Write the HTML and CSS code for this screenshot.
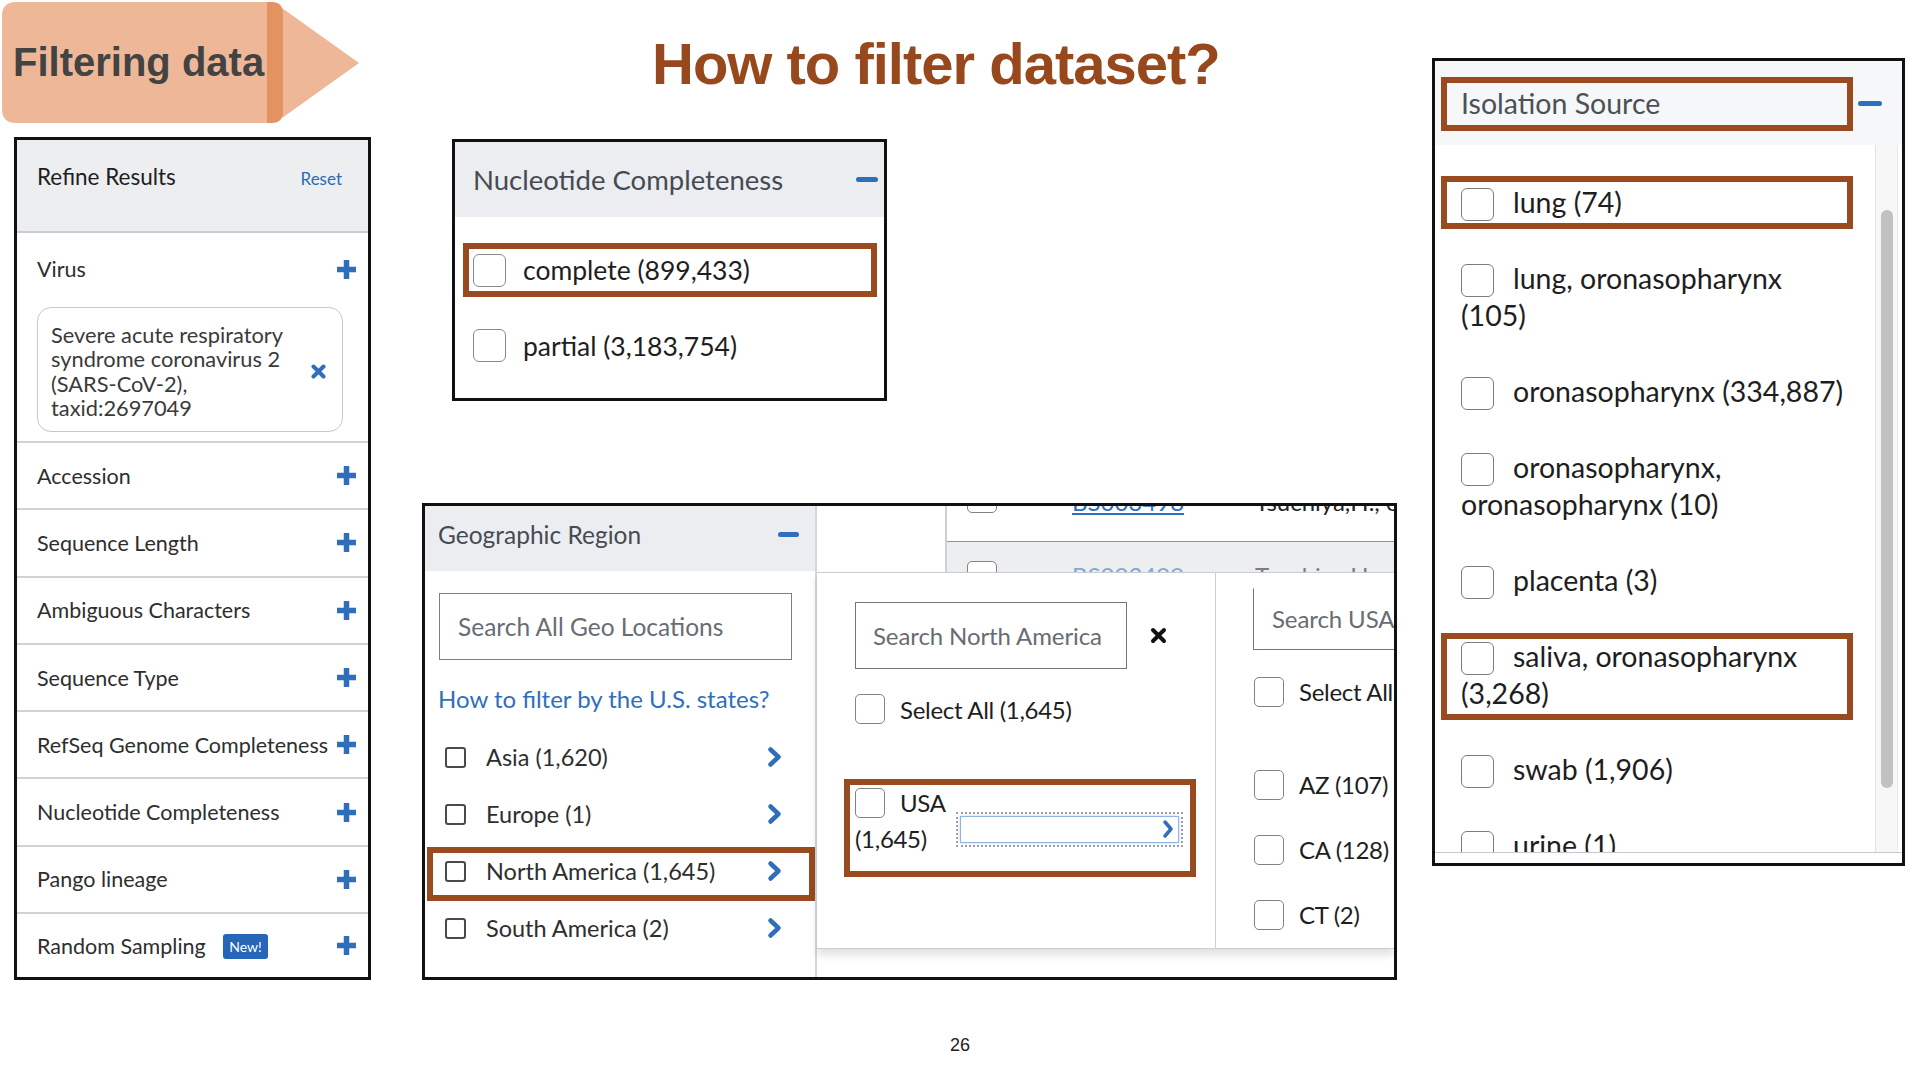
FILE: index.html
```html
<!DOCTYPE html>
<html lang="en">
<head>
<meta charset="utf-8">
<title>Filtering data</title>
<link rel="stylesheet" href="styles.css">
</head>
<body>
<div class="slide">

  <div class="banner">
    <svg class="banner-shape" width="362" height="126" viewBox="0 0 362 126">
      <path d="M16 2 H272 V123 H16 Q2 123 2 109 V16 Q2 2 16 2 Z" fill="#EEB898"/>
      <path d="M282 8 L359 63 L282 118 Z" fill="#EEB898"/>
      <path d="M267 2 H272 Q283 2 283 14 V111 Q283 123 272 123 H267 Z" fill="#E4925F"/>
    </svg>
    <span class="banner-text">Filtering data</span>
  </div>

  <h1 class="title">How to filter dataset?</h1>

  <!-- Refine Results sidebar -->
  <section class="refine">
    <header class="refine-head">
      <span class="refine-title">Refine Results</span>
      <span class="reset">Reset</span>
    </header>
    <div class="virus">
      <div class="facet-row virus-row"><span>Virus</span><svg class="ic-plus" width="19" height="19" viewBox="0 0 19 19"><path d="M9.5 1V18M1 9.5H18" stroke="#2f6eba" stroke-width="5.5" stroke-linecap="round"/></svg></div>
      <div class="chip">
        <span class="chip-text">Severe acute respiratory<br>syndrome coronavirus 2<br>(SARS-CoV-2),<br>taxid:2697049</span>
        <svg width="15" height="15" viewBox="0 0 15 15"><path d="M2.5 2.5L12.5 12.5M12.5 2.5L2.5 12.5" stroke="#2f6eba" stroke-width="4" stroke-linecap="round"/></svg>
      </div>
    </div>
    <div class="facet-row"><span>Accession</span><svg class="ic-plus" width="19" height="19" viewBox="0 0 19 19"><path d="M9.5 1V18M1 9.5H18" stroke="#2f6eba" stroke-width="5.5" stroke-linecap="round"/></svg></div>
    <div class="facet-row"><span>Sequence Length</span><svg class="ic-plus" width="19" height="19" viewBox="0 0 19 19"><path d="M9.5 1V18M1 9.5H18" stroke="#2f6eba" stroke-width="5.5" stroke-linecap="round"/></svg></div>
    <div class="facet-row"><span>Ambiguous Characters</span><svg class="ic-plus" width="19" height="19" viewBox="0 0 19 19"><path d="M9.5 1V18M1 9.5H18" stroke="#2f6eba" stroke-width="5.5" stroke-linecap="round"/></svg></div>
    <div class="facet-row"><span>Sequence Type</span><svg class="ic-plus" width="19" height="19" viewBox="0 0 19 19"><path d="M9.5 1V18M1 9.5H18" stroke="#2f6eba" stroke-width="5.5" stroke-linecap="round"/></svg></div>
    <div class="facet-row"><span>RefSeq Genome Completeness</span><svg class="ic-plus" width="19" height="19" viewBox="0 0 19 19"><path d="M9.5 1V18M1 9.5H18" stroke="#2f6eba" stroke-width="5.5" stroke-linecap="round"/></svg></div>
    <div class="facet-row"><span>Nucleotide Completeness</span><svg class="ic-plus" width="19" height="19" viewBox="0 0 19 19"><path d="M9.5 1V18M1 9.5H18" stroke="#2f6eba" stroke-width="5.5" stroke-linecap="round"/></svg></div>
    <div class="facet-row"><span>Pango lineage</span><svg class="ic-plus" width="19" height="19" viewBox="0 0 19 19"><path d="M9.5 1V18M1 9.5H18" stroke="#2f6eba" stroke-width="5.5" stroke-linecap="round"/></svg></div>
    <div class="facet-row last"><span>Random Sampling <span class="badge">New!</span></span><svg class="ic-plus" width="19" height="19" viewBox="0 0 19 19"><path d="M9.5 1V18M1 9.5H18" stroke="#2f6eba" stroke-width="5.5" stroke-linecap="round"/></svg></div>
  </section>

  <!-- Nucleotide Completeness -->
  <section class="nuc">
    <header class="nuc-head"><span>Nucleotide Completeness</span><span class="minus"></span></header>
    <div class="nuc-opt hl-box"><span class="cb cb-lg"></span><span>complete (899,433)</span></div>
    <div class="nuc-opt plain"><span class="cb cb-lg"></span><span>partial (3,183,754)</span></div>
  </section>

  <!-- Geographic Region -->
  <section class="geo">
    <div class="geo-left">
      <header class="geo-head"><span>Geographic Region</span><span class="minus minus-sm"></span></header>
      <div class="geo-search">Search All Geo Locations</div>
      <div class="geo-link">How to filter by the U.S. states?</div>
      <div class="geo-item first"><span class="cb cb-sq"></span><span class="geo-label">Asia (1,620)</span><svg width="15" height="22" viewBox="0 0 15 22"><path d="M3.5 3.5L11.5 11L3.5 18.5" fill="none" stroke="#2f6eba" stroke-width="4.5" stroke-linecap="round" stroke-linejoin="round"/></svg></div>
      <div class="geo-item"><span class="cb cb-sq"></span><span class="geo-label">Europe (1)</span><svg width="15" height="22" viewBox="0 0 15 22"><path d="M3.5 3.5L11.5 11L3.5 18.5" fill="none" stroke="#2f6eba" stroke-width="4.5" stroke-linecap="round" stroke-linejoin="round"/></svg></div>
      <div class="geo-item hl-na"><span class="cb cb-sq"></span><span class="geo-label">North America (1,645)</span><svg width="15" height="22" viewBox="0 0 15 22"><path d="M3.5 3.5L11.5 11L3.5 18.5" fill="none" stroke="#2f6eba" stroke-width="4.5" stroke-linecap="round" stroke-linejoin="round"/></svg></div>
      <div class="geo-item"><span class="cb cb-sq"></span><span class="geo-label">South America (2)</span><svg width="15" height="22" viewBox="0 0 15 22"><path d="M3.5 3.5L11.5 11L3.5 18.5" fill="none" stroke="#2f6eba" stroke-width="4.5" stroke-linecap="round" stroke-linejoin="round"/></svg></div>
    </div>
    <div class="geo-right">
      <div class="tstrip">
        <div class="tstrip-blank"></div>
        <div class="ttable">
          <div class="trow trow1">
            <div class="tcell c1"><span class="cb cb-fly up"></span></div>
            <div class="tcell c2"><span class="tlink up-t">BS003498</span></div>
            <div class="tcell c3"><span class="up-t">Tsuchiya,H., et al.</span></div>
          </div>
          <div class="trow trow2">
            <div class="tcell c1"><span class="cb cb-fly down"></span></div>
            <div class="tcell c2"><span class="tlink down-t">BS003499</span></div>
            <div class="tcell c3"><span class="down-t">Tsuchiya,H., et al.</span></div>
          </div>
        </div>
      </div>
      <div class="flyout">
        <div class="fly-col1">
          <div class="fly-search-row">
            <div class="fly-search">Search North America</div>
            <svg class="fly-x" width="17" height="17" viewBox="0 0 17 17"><path d="M3 3L14 14M14 3L3 14" stroke="#111" stroke-width="4" stroke-linecap="round"/></svg>
          </div>
          <div class="fly-row select-all"><span class="cb cb-fly"></span><span class="fly-text">Select All (1,645)</span></div>
          <div class="usa-item">
            <div class="usa-label"><span class="cb cb-fly inl"></span><span class="fly-text usa-name">USA</span><br><span class="fly-text">(1,645)</span></div>
            <div class="usa-btn"><div class="usa-btn-inner"><svg width="12" height="20" viewBox="0 0 12 20"><path d="M3 3L9 10L3 17" fill="none" stroke="#2f6eba" stroke-width="3.5" stroke-linecap="round" stroke-linejoin="round"/></svg></div></div>
          </div>
        </div>
        <div class="fly-col2">
          <div class="usa-search">Search USA</div>
          <div class="fly-row st-all"><span class="cb cb-fly"></span><span class="fly-text">Select All</span></div>
          <div class="fly-row st first-st"><span class="cb cb-fly"></span><span class="fly-text">AZ (107)</span></div>
          <div class="fly-row st"><span class="cb cb-fly"></span><span class="fly-text">CA (128)</span></div>
          <div class="fly-row st"><span class="cb cb-fly"></span><span class="fly-text">CT (2)</span></div>
        </div>
      </div>
    </div>
  </section>

  <!-- Isolation Source -->
  <section class="iso">
    <header class="iso-head"><span>Isolation Source</span><span class="minus minus-iso"></span></header>
    <div class="iso-body">
      <div class="iso-list">
        <div class="iso-items">
          <div class="iso-item"><span class="cb cb-iso"></span></div>
          <div class="iso-item hl-lung"><span class="cb cb-iso"></span>lung (74)</div>
          <div class="iso-item"><span class="cb cb-iso"></span>lung, oronasopharynx (105)</div>
          <div class="iso-item"><span class="cb cb-iso"></span>oronasopharynx (334,887)</div>
          <div class="iso-item"><span class="cb cb-iso"></span>oronasopharynx, oronasopharynx (10)</div>
          <div class="iso-item"><span class="cb cb-iso"></span>placenta (3)</div>
          <div class="iso-item hl-saliva"><span class="cb cb-iso"></span>saliva, oronasopharynx (3,268)</div>
          <div class="iso-item"><span class="cb cb-iso"></span>swab (1,906)</div>
          <div class="iso-item"><span class="cb cb-iso"></span>urine (1)</div>
        </div>
      </div>
      <div class="iso-track"><div class="iso-thumb"></div></div>
    </div>
  </section>

  <div class="page-num">26</div>
</div>
</body>
</html>
```

FILE: styles.css
```css
*, *::before, *::after { box-sizing: border-box; }
html, body { margin: 0; padding: 0; }
body {
  width: 1920px;
  height: 1080px;
  overflow: hidden;
  background: #ffffff;
  font-family: Lato, "Noto Sans", sans-serif;
  color: #333;
}
.slide { position: relative; width: 1920px; height: 1080px; }

/* banner */
.banner {
  position: absolute; left: 0; top: 0;
  width: 362px; height: 124px;
  display: flex; align-items: center;
  padding-left: 13px;
}
.banner-shape { position: absolute; left: 0; top: 0; }
.banner-text {
  position: relative;
  font: bold 40px "Liberation Sans", Arial, sans-serif;
  color: #434343;
}

/* title */
.title {
  position: absolute; left: 652px; top: 35px;
  margin: 0;
  font: bold 58px/1 "Liberation Sans", Arial, sans-serif;
  letter-spacing: -1px;
  color: #97481d;
}

/* common */
.minus { display: block; width: 22px; height: 5px; border-radius: 3px; background: #2f6eba; }
.cb { display: inline-block; flex: none; background: #fff; }
.cb-lg { width: 33px; height: 33px; border: 1.5px solid #8a8a8a; border-radius: 6px; }
.cb-sq { width: 21px; height: 21px; border: 2px solid #4a4a4a; border-radius: 3px; }
.cb-fly { width: 30px; height: 30px; border: 1.5px solid #828282; border-radius: 5px; }
.cb-iso { width: 33px; height: 33px; border: 1.5px solid #7c7c7c; border-radius: 6px; }

/* refine sidebar */
.refine {
  position: absolute; left: 14px; top: 137px;
  width: 357px; height: 843px;
  border: 3px solid #111;
  background: #fff;
  display: flex; flex-direction: column;
}
.refine-head {
  height: 93px; flex: none;
  background: #edeef0;
  border-bottom: 2px solid #c9ccd0;
  display: flex; justify-content: space-between; align-items: baseline;
  padding: 23px 26px 0 20px;
}
.refine-title { font-size: 22.5px; color: #1e1e1e; }
.reset { font-size: 17px; color: #2b6cb5; }
.virus { height: 210px; flex: none; border-bottom: 2px solid #cfd2d6; }
.facet-row {
  display: flex; align-items: center; justify-content: space-between;
  padding: 0 12px 0 20px;
  font-size: 21.5px; color: #2e2e2e;
  height: 67.3px; flex: none;
  border-bottom: 2px solid #cfd2d6;
}
.virus .facet-row { height: 72px; border-bottom: none; }
.facet-row.last { border-bottom: none; flex: 1; }
.ic-plus { flex: none; }
.badge {
  display: inline-block;
  margin-left: 12px;
  padding: 0 6px;
  height: 25px; line-height: 25px;
  font-size: 14px;
  color: #fff; background: #2566b8;
  border-radius: 3px;
  vertical-align: 2px;
}
.chip {
  margin: 2px 25px 0 20px;
  height: 125px;
  border: 1.5px solid #c5c7ca;
  border-radius: 14px;
  display: flex; align-items: center; justify-content: space-between;
  padding: 4px 16px 0 13px;
}
.chip-text { font-size: 21.8px; line-height: 24.5px; color: #3a3a3a; }

/* nucleotide */
.nuc {
  position: absolute; left: 452px; top: 139px;
  width: 435px; height: 262px;
  border: 3px solid #111; background: #fff;
}
.nuc-head {
  height: 75px;
  background: #ecedf0;
  display: flex; align-items: center; justify-content: space-between;
  padding: 0 6px 0 18px;
  font-size: 27.5px; color: #464b53;
}
.nuc-opt {
  display: flex; align-items: center;
  font-size: 26.5px; color: #1e1e1e;
}
.nuc-opt .cb { margin-right: 17px; }
.hl-box {
  margin: 26px 7px 0 8px;
  height: 54px;
  border: 6px solid #9a4a1f;
  padding-left: 4px;
}
.nuc-opt.plain { margin-top: 30px; padding-left: 18px; height: 37px; }

/* geographic */
.geo {
  position: absolute; left: 422px; top: 503px;
  width: 975px; height: 477px;
  border: 3px solid #111; background: #fff;
  display: flex; overflow: hidden;
}
.geo-left { width: 392px; flex: none; border-right: 2px solid #d3d6da; }
.geo-head {
  height: 65px;
  background: #ecedf0;
  display: flex; align-items: flex-start; justify-content: space-between;
  padding: 14px 16px 0 13px;
  font-size: 24.5px; line-height: 30px; color: #464b53;
}
.minus-sm { width: 21px; margin-top: 12px; }
.geo-search {
  margin: 22px 0 0 14px;
  width: 353px; height: 67px;
  border: 1.5px solid #7b8087;
  display: flex; align-items: center;
  padding-left: 18px;
  font-size: 24.5px; color: #686c73;
}
.geo-link {
  margin-top: 24px;
  padding-left: 13px;
  line-height: 30px;
  font-size: 24px; color: #2e6fbe;
}
.geo-item {
  position: relative;
  height: 57px;
  display: flex; align-items: center;
  padding: 0 33px 0 20px;
  font-size: 23.5px; color: #2e2e2e;
}
.geo-item.first { margin-top: 14.5px; }
.geo-item .cb { margin-right: 20px; }
.geo-label { flex: 1; }
.hl-na::after {
  content: "";
  position: absolute; left: 2px; right: 0; top: 4.5px; height: 54px;
  border: 6px solid #9a4a1f;
}

.geo-right { flex: 1; min-width: 0; display: flex; flex-direction: column; }
.tstrip { height: 66px; flex: none; display: flex; }
.tstrip-blank { width: 128px; flex: none; }
.ttable { flex: 1; border-left: 2px solid #cdd0d4; display: flex; flex-direction: column; overflow: hidden; }
.trow { display: flex; overflow: hidden; font-size: 24px; white-space: nowrap; }
.trow1 { height: 36px; flex: none; border-bottom: 1.5px solid #8e939a; }
.trow2 { flex: 1; background: #edeef0; }
.tcell { flex: none; }
.tcell.c1 { width: 125px; padding-left: 20px; }
.tcell.c2 { width: 183px; }
.tcell.c3 { flex: 1; color: #222; }
.tlink { color: #2e6fbe; text-decoration: underline; }
.up { margin-top: -23px; display: block; }
.up-t { display: block; line-height: 24px; margin-top: -16px; }
.down { margin-top: 19px; display: block; }
.down-t { display: block; line-height: 24px; margin-top: 22px; opacity: .55; }

.flyout {
  height: 377px; flex: none;
  border-top: 1.5px solid #cbced2;
  border-bottom: 1.5px solid #cbced2;
  box-shadow: 0 6px 8px rgba(0,0,0,0.12);
  display: flex;
  position: relative;
}
.fly-col1 { width: 399px; flex: none; border-right: 1.5px solid #cbced2; }
.fly-col2 { flex: 1; min-width: 0; overflow: hidden; }
.fly-text { font-size: 24px; letter-spacing: -0.3px; color: #1e1e1e; }
.fly-search-row { display: flex; align-items: center; margin-top: 28.5px; padding-left: 38px; }
.fly-search {
  width: 272px; height: 67px;
  border: 1.5px solid #72777e;
  display: flex; align-items: center;
  padding-left: 17px;
  font-size: 24px; letter-spacing: -0.1px; color: #686c73;
  white-space: nowrap; overflow: hidden;
}
.fly-x { margin-left: 23px; }
.fly-row { display: flex; align-items: center; padding-left: 38px; }
.fly-row .cb { margin-right: 15px; }
.select-all { margin-top: 25px; height: 31px; }
.usa-item {
  position: relative;
  display: flex; align-items: flex-start;
  margin-top: 61.5px;
  padding-left: 38px;
}
.usa-item::after {
  content: "";
  position: absolute; left: 27px; top: -7.5px; width: 352px; height: 98px;
  border: 6px solid #9a4a1f;
}
.usa-label { width: 101px; line-height: 33px; }
.usa-label .inl { vertical-align: top; margin-top: 2px; margin-right: 15px; }
.usa-btn {
  margin-top: 25.5px;
  width: 227px; height: 35px;
  border: 2px dotted #9aa0a6;
  padding: 2px;
}
.usa-btn-inner {
  height: 100%;
  border: 1.5px solid #8fb4e3;
  box-shadow: 0 0 3px rgba(80,140,220,0.35);
  display: flex; align-items: center; justify-content: flex-end;
  padding-right: 4px;
}
.usa-search {
  margin: 14.5px 0 0 37px;
  width: 200px; height: 62px;
  border: 1.5px solid #72777e; border-right: none; border-top-color: transparent;
  display: flex; align-items: center;
  padding-left: 18px;
  font-size: 24px; letter-spacing: -0.1px; color: #686c73;
  white-space: nowrap;
}
.fly-col2 .fly-row { height: 65px; white-space: nowrap; }
.st-all { margin-top: 9.5px; }
.first-st { margin-top: 28px; }

/* isolation source */
.iso {
  position: absolute; left: 1432px; top: 58px;
  width: 473px; height: 808px;
  border: 3px solid #111; background: #fff;
  display: flex; flex-direction: column;
}
.iso-head {
  position: relative;
  height: 84px; flex: none;
  background: #f6f7f9;
  display: flex; align-items: center; justify-content: space-between;
  padding: 0 20px 0 26px;
  font-size: 28.5px; color: #4c5158;
}
.iso-head::after {
  content: "";
  position: absolute; left: 6px; top: 16px; width: 412px; height: 54px;
  border: 6px solid #9a4a1f;
}
.minus-iso { width: 24px; }
.iso-body {
  height: 708px; flex: none;
  display: flex;
  border-bottom: 1.5px solid #c5c8cc;
  padding-right: 4px;
}
.iso-list { flex: 1; overflow: hidden; }
.iso-items { margin-top: -37.5px; padding-left: 26px; }
.iso-item {
  position: relative;
  width: 386px;
  font-size: 28.5px; line-height: 37px;
  margin-bottom: 39px;
  color: #1e1e1e;
}
.iso-item .cb { vertical-align: top; margin-top: 4px; margin-right: 19px; }
.hl-lung::after {
  content: "";
  position: absolute; left: -20px; top: -7.5px; width: 412px; height: 53px;
  border: 6px solid #9a4a1f;
}
.hl-saliva::after {
  content: "";
  position: absolute; left: -20px; top: -4.5px; width: 412px; height: 87px;
  border: 6px solid #9a4a1f;
}
.iso-track {
  width: 23px; flex: none;
  background: #f7f7f7;
  border-left: 1px solid #e2e2e2;
  border-right: 1px solid #ececec;
  padding: 65px 4px 0 5px;
}
.iso-thumb { width: 12px; height: 578px; border-radius: 6px; background: #c1c1c1; }

.page-num {
  position: absolute; left: 950px; top: 1035px;
  font: 18px "Liberation Sans", Arial, sans-serif;
  color: #222;
}
```
